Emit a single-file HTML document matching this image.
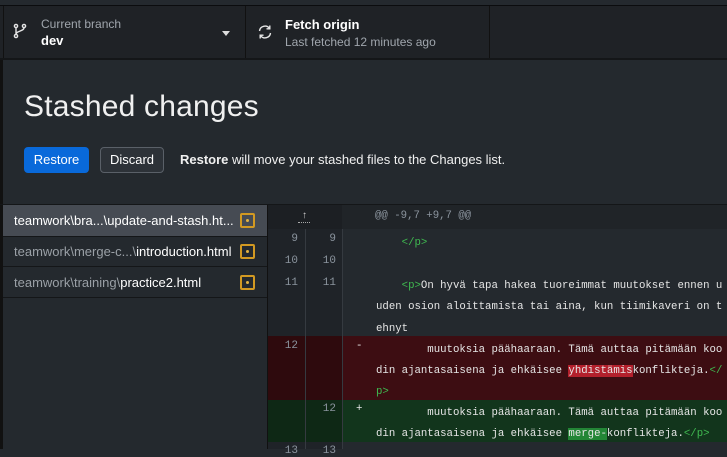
<!DOCTYPE html>
<html><head><meta charset="utf-8"><style>
*{margin:0;padding:0;box-sizing:border-box}
body{width:727px;height:449px;overflow:hidden;background:#24292e;font-family:"Liberation Sans",sans-serif;position:relative;color:#fff}
.abs{position:absolute}
.mono{font-family:"Liberation Mono",monospace;font-size:10.7px;white-space:pre}
.g{color:#3fb950}
.ln{position:absolute;font-family:"Liberation Mono",monospace;font-size:11px;color:#8b949e;text-align:right;width:30px}
</style></head><body>
<div class="abs" style="left:0;top:5px;width:727px;height:2px;background:#0b0c0e"></div>
<div class="abs" style="left:0;top:6px;width:727px;height:52px;background:#1f2226"></div>
<div class="abs" style="left:0;top:58px;width:727px;height:2px;background:#141618"></div>
<div class="abs" style="left:3px;top:6px;width:1px;height:52px;background:#111"></div>
<div class="abs" style="left:245px;top:6px;width:1px;height:52px;background:#111"></div>
<div class="abs" style="left:489px;top:6px;width:1px;height:52px;background:#111"></div>
<svg class="abs" style="left:13px;top:23px" width="14" height="16" viewBox="0 0 14 16" fill="none" stroke="#e6e6e6" stroke-width="1.4"><circle cx="3" cy="3" r="1.6"/><circle cx="3" cy="13" r="1.6"/><circle cx="11" cy="3" r="1.6"/><path d="M3 4.6v6.8M11 4.6c0 4-8 3-8 6.8"/></svg>
<div class="abs" style="left:41px;top:17px;font-size:12px;color:#a0a6ad">Current branch</div>
<div class="abs" style="left:41px;top:33px;font-size:13px;font-weight:bold;color:#fff">dev</div>
<div class="abs" style="left:222px;top:31px;width:0;height:0;border-left:4px solid transparent;border-right:4px solid transparent;border-top:5px solid #ddd"></div>
<svg class="abs" style="left:257px;top:24px" width="16" height="16" viewBox="0 0 16 16" fill="none" stroke="#e6e6e6" stroke-width="1.4"><path d="M2.5 7A5.5 5.5 0 0 1 12.5 4.5M13.5 9A5.5 5.5 0 0 1 3.5 11.5"/><path d="M12.8 1.5v3.3H9.5M3.2 14.5v-3.3h3.3"/></svg>
<div class="abs" style="left:285px;top:17px;font-size:13px;font-weight:bold">Fetch origin</div>
<div class="abs" style="left:285px;top:35px;font-size:12px;color:#a0a6ad">Last fetched 12 minutes ago</div>

<div class="abs" style="left:0;top:60px;width:3px;height:389px;background:#111"></div>
<div class="abs" style="left:24px;top:90px;font-size:30px;color:#f0f0f0;letter-spacing:0.2px">Stashed changes</div>
<div class="abs" style="left:24px;top:147px;width:65px;height:26px;background:#0969da;border-radius:4px;font-size:13px;text-align:center;line-height:26px">Restore</div>
<div class="abs" style="left:100px;top:147px;width:64px;height:26px;border:1px solid #5a6068;background:#2d3238;border-radius:4px;font-size:13px;text-align:center;line-height:24px">Discard</div>
<div class="abs" style="left:180px;top:152px;font-size:13px;color:#f0f0f0"><b>Restore</b> will move your stashed files to the Changes list.</div>

<div class="abs" style="left:0;top:204px;width:727px;height:1px;background:#141618"></div>
<!-- file list -->
<div class="abs" style="left:3px;top:205px;width:264px;height:31px;background:#464b53"></div>
<div class="abs" style="left:3px;top:236px;width:264px;height:1px;background:#141618"></div>
<div class="abs" style="left:3px;top:266px;width:264px;height:1px;background:#141618"></div>
<div class="abs" style="left:3px;top:297px;width:264px;height:1px;background:#141618"></div>
<div class="abs" style="left:14px;top:213px;font-size:13px;color:#fff">teamwork\bra...\update-and-stash.ht...</div>
<div class="abs" style="left:14px;top:244px;font-size:13px;color:#9aa0a6">teamwork\merge-c...\<span style="color:#fff">introduction.html</span></div>
<div class="abs" style="left:14px;top:275px;font-size:13px;color:#9aa0a6">teamwork\training\<span style="color:#fff">practice2.html</span></div>
<div class="abs" style="left:240px;top:213px;width:15px;height:15px;border:2px solid #d29922;border-radius:2px"><div style="position:absolute;left:4px;top:4px;width:3px;height:3px;background:#e3b341;border-radius:50%"></div></div>
<div class="abs" style="left:240px;top:244px;width:15px;height:15px;border:2px solid #d29922;border-radius:2px"><div style="position:absolute;left:4px;top:4px;width:3px;height:3px;background:#e3b341;border-radius:50%"></div></div>
<div class="abs" style="left:240px;top:275px;width:15px;height:15px;border:2px solid #d29922;border-radius:2px"><div style="position:absolute;left:4px;top:4px;width:3px;height:3px;background:#e3b341;border-radius:50%"></div></div>
<div class="abs" style="left:267px;top:205px;width:1px;height:244px;background:#111"></div>

<!-- diff -->
<div class="abs" style="left:268px;top:205px;width:459px;height:244px;background:#24292e"></div>
<div class="abs" style="left:268px;top:205px;width:74px;height:244px;background:#1f2328"></div>
<div class="abs" style="left:268px;top:205px;width:459px;height:24px;background:#1c1f23"></div>
<div class="abs" style="left:342px;top:205px;width:385px;height:24px;background:#202428"></div>
<div class="abs" style="left:268px;top:336px;width:459px;height:64px;background:#3d0d12"></div>
<div class="abs" style="left:268px;top:336px;width:74px;height:64px;background:#2e0a0d"></div>
<div class="abs" style="left:268px;top:400px;width:459px;height:42px;background:#12351c"></div>
<div class="abs" style="left:268px;top:400px;width:74px;height:42px;background:#0e2815"></div>
<div class="abs" style="left:305px;top:229px;width:1px;height:220px;background:#353a40"></div>
<div class="abs" style="left:342px;top:229px;width:1px;height:220px;background:#353a40"></div>
<div class="abs" style="left:302px;top:211px;font-size:10px;color:#ccc;line-height:10px">↑</div>
<div class="abs" style="left:298px;top:222px;width:12px;height:0;border-top:1px dotted #aaa"></div>
<div class="abs mono" style="left:375px;top:210px;color:#8b949e">@@ -9,7 +9,7 @@</div>

<div class="ln" style="left:268px;top:233px">9</div><div class="ln" style="left:306px;top:233px">9</div>
<div class="ln" style="left:268px;top:255px">10</div><div class="ln" style="left:306px;top:255px">10</div>
<div class="ln" style="left:268px;top:277px">11</div><div class="ln" style="left:306px;top:277px">11</div>
<div class="ln" style="left:268px;top:340px">12</div>
<div class="ln" style="left:306px;top:403px">12</div>
<div class="ln" style="left:268px;top:445px">13</div><div class="ln" style="left:306px;top:445px">13</div>

<div class="abs mono" style="left:376px;top:233px;line-height:21.4px;color:#e6e6e6">    <span class="g">&lt;/p&gt;</span>

    <span class="g">&lt;p&gt;</span>On hyvä tapa hakea tuoreimmat muutokset ennen u
uden osion aloittamista tai aina, kun tiimikaveri on t
ehnyt</div>
<div class="abs mono" style="left:356px;top:340px;color:#e6e6e6">-</div>
<div class="abs mono" style="left:356px;top:403px;color:#e6e6e6">+</div>
<div class="abs mono" style="left:376px;top:340px;line-height:21.2px;color:#e6e6e6">        muutoksia päähaaraan. Tämä auttaa pitämään koo
din ajantasaisena ja ehkäisee <span style="background:#b3202c">yhdistämis</span>konflikteja.<span class="g">&lt;/</span>
<span class="g">p&gt;</span></div>
<div class="abs mono" style="left:376px;top:403px;line-height:21.2px;color:#e6e6e6">        muutoksia päähaaraan. Tämä auttaa pitämään koo
din ajantasaisena ja ehkäisee <span style="background:#238636">merge-</span>konflikteja.<span class="g">&lt;/p&gt;</span></div>
</body></html>
